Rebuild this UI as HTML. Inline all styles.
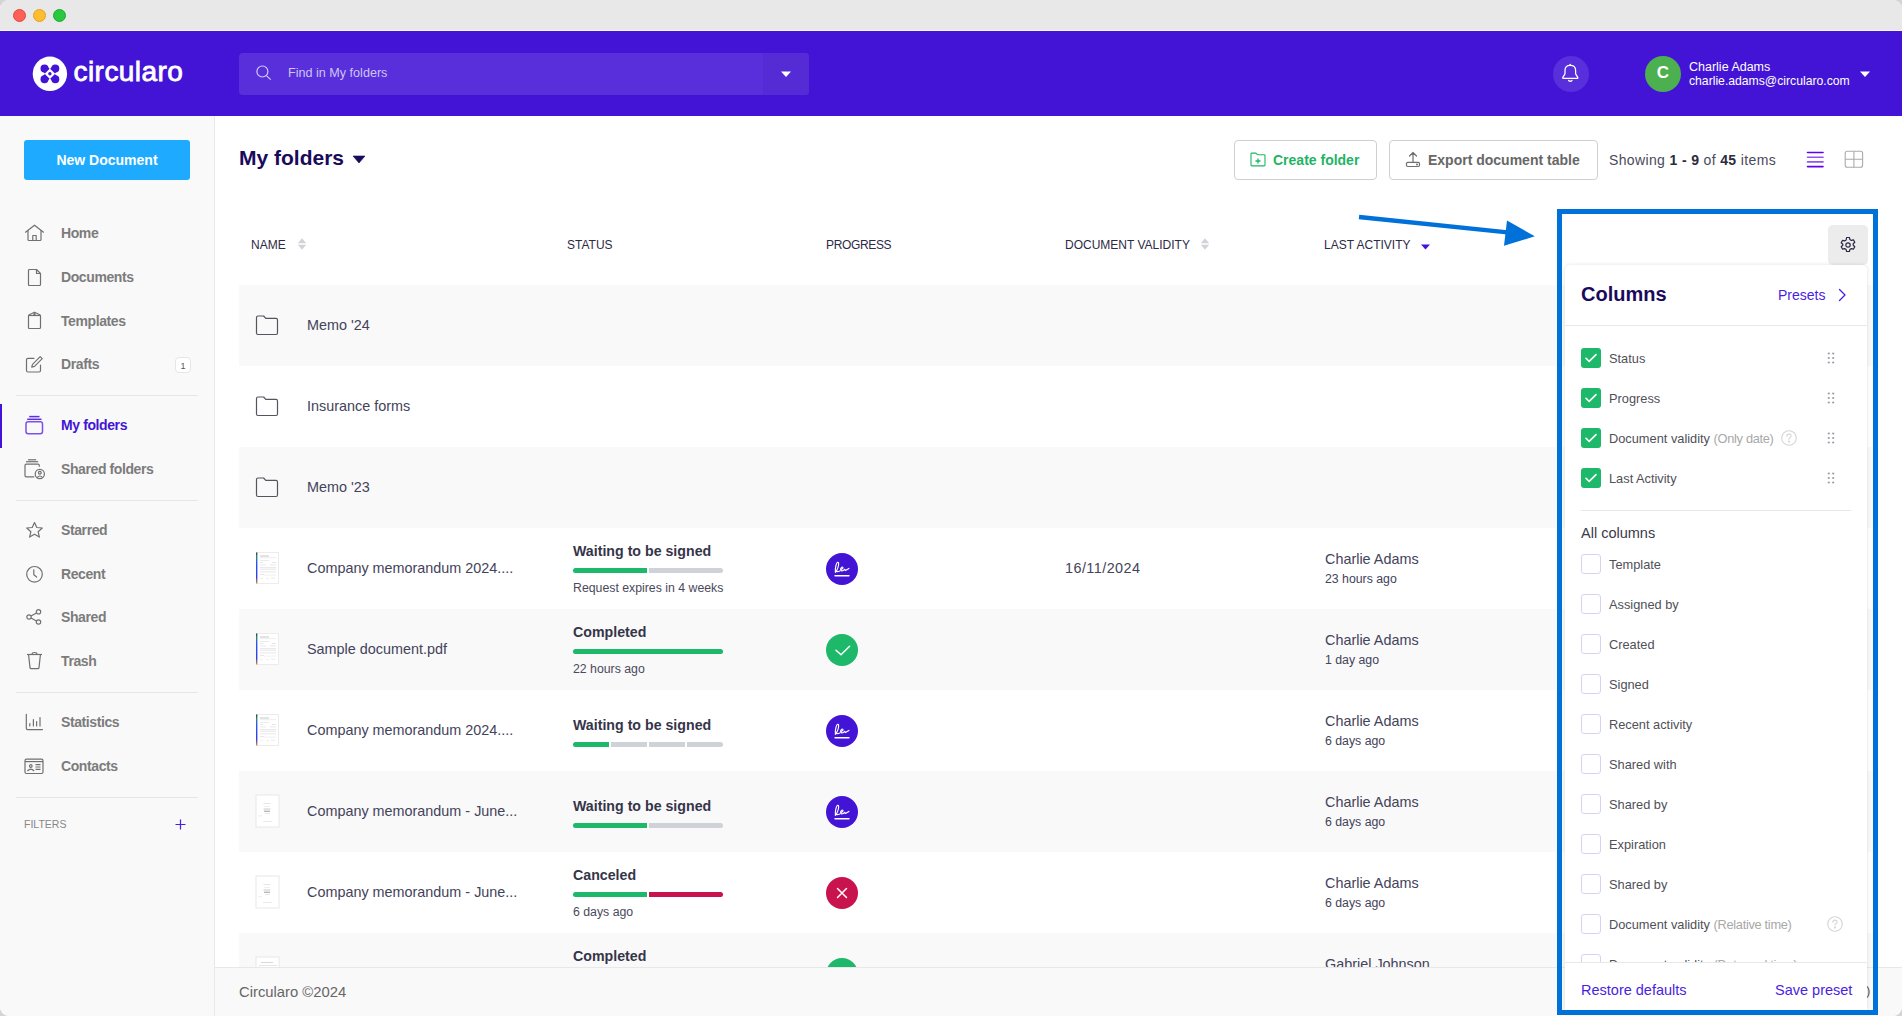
<!DOCTYPE html>
<html><head><meta charset="utf-8">
<style>
*{box-sizing:border-box;margin:0;padding:0}
html,body{width:1902px;height:1016px;overflow:hidden;background:#d4d4d4;font-family:"Liberation Sans",sans-serif}
.a{position:absolute}
.t{position:absolute;white-space:nowrap;line-height:20px;height:20px}
#titlebar{left:0;top:0;width:1902px;height:31px;background:#e8e8e8;border-bottom:1px solid #f4f4f0}
.dot{position:absolute;top:9px;width:13px;height:13px;border-radius:50%}
#header{left:0;top:31px;width:1902px;height:85px;background:#4314d6}
#search{left:239px;top:53px;width:570px;height:42px;background:#582fda;border-radius:4px;overflow:hidden}
#sidebar{left:0;top:116px;width:215px;height:900px;background:#f9f9f9;border-right:1px solid #e9e9e9}
.nav{position:absolute;left:61px;font-size:14px;letter-spacing:-0.4px;font-weight:700;color:#7c7c7c;line-height:20px;white-space:nowrap}
.ico{position:absolute}
.div{position:absolute;left:16px;width:182px;height:1px;background:#e6e6e6}
.row{position:absolute;left:239px;width:1639px;height:81px}
.g{background:#f9f9f9}
.hd{position:absolute;top:235px;font-size:12px;color:#2d2a45;line-height:20px;white-space:nowrap}
.nm{position:absolute;left:307px;font-size:14.4px;color:#43435a;white-space:nowrap;line-height:20px}
.st{position:absolute;left:573px;font-size:14.2px;font-weight:700;color:#35354a;white-space:nowrap;line-height:20px}
.sub{position:absolute;left:573px;margin-top:1px;font-size:12.3px;color:#4a4a5c;white-space:nowrap;line-height:18px}
.bar{position:absolute;left:573px;height:5px;border-radius:3px}
.la1{position:absolute;left:1325px;margin-top:1px;font-size:14.4px;color:#43435a;white-space:nowrap;line-height:20px}
.la2{position:absolute;left:1325px;margin-top:1px;font-size:12.3px;color:#43435a;white-space:nowrap;line-height:18px}
.pc{position:absolute;left:826px;width:32px;height:32px;border-radius:50%}
.cb{position:absolute;left:1581px;width:20px;height:20px;border-radius:3px}
.cbon{background:#1db86a}
.cboff{border:1px solid #d8d2f2;background:#fff}
.cl{position:absolute;left:1609px;font-size:12.8px;margin-top:1px;color:#505058;white-space:nowrap;line-height:20px}
.cl span{color:#a8a8a8;letter-spacing:-0.3px}
.drag{position:absolute;left:1828px;width:6px;height:12px}
</style></head><body>
<div id="win" style="position:absolute;left:0;top:0;width:1902px;height:1016px;overflow:hidden;border-radius:9px;background:#fff">

<!-- title bar -->
<div id="titlebar" class="a">
  <div class="dot" style="left:13px;background:#fe5f57;border:1px solid #e2463f"></div>
  <div class="dot" style="left:33px;background:#febc2e;border:1px solid #e0a028"></div>
  <div class="dot" style="left:53px;background:#28c840;border:1px solid #1aab2e"></div>
</div>

<!-- header -->
<div id="header" class="a"></div>
<svg class="a" style="left:32px;top:56px" width="36" height="36" viewBox="0 0 36 36">
  <circle cx="17.9" cy="17.8" r="17.2" fill="#fff"/>
  <g fill="#4314d6" stroke="#4314d6" stroke-linecap="butt">
    <circle cx="12.5" cy="12.4" r="4.0" stroke="none"/><circle cx="23.3" cy="12.4" r="4.0" stroke="none"/>
    <circle cx="12.5" cy="23.2" r="4.0" stroke="none"/><circle cx="23.3" cy="23.2" r="4.0" stroke="none"/>
    <path d="M12.5 12.4L23.3 23.2M23.3 12.4L12.5 23.2" stroke-width="6.6"/>
  </g>
  <path d="M17.9 12.5L23.2 17.8L17.9 23.1L12.6 17.8z" fill="#fff"/>
  <circle cx="17.9" cy="17.8" r="1.7" fill="#4314d6"/>
</svg>
<div class="t" style="left:73.5px;top:56.5px;font-size:28px;line-height:30px;height:30px;font-weight:400;color:#fff;-webkit-text-stroke:0.8px #fff;letter-spacing:0.45px">circularo</div>

<div id="search" class="a">
  <div class="a" style="left:524px;top:0;width:46px;height:42px;background:#552bd5"></div>
</div>
<svg class="a" style="left:254px;top:63px" width="20" height="20" viewBox="0 0 20 20">
  <circle cx="8.4" cy="8.5" r="5.5" fill="none" stroke="#d6ccf5" stroke-width="1.2"/>
  <line x1="12.4" y1="12.6" x2="16.7" y2="16.6" stroke="#d6ccf5" stroke-width="1.2"/>
</svg>
<div class="t" style="left:288px;top:63px;font-size:12.6px;color:#cfc4f4">Find in My folders</div>
<svg class="a" style="left:780px;top:70px" width="12" height="8" viewBox="0 0 12 8"><path d="M1 1.5h10L6 7z" fill="#fff"/></svg>

<div class="a" style="left:1553px;top:56px;width:36px;height:36px;border-radius:50%;background:#582fda"></div>
<svg class="a" style="left:1560px;top:62px" width="22" height="22" viewBox="0 0 22 22" fill="none" stroke="#fff" stroke-width="1.25" stroke-linejoin="round" stroke-linecap="round">
  <path d="M3.1 16.3h14.4c.4 0 .6-.4.4-.7l-1.5-2.4c-.5-.7-.8-1.2-.8-2V8.3c0-3-2.1-5-5.3-5s-5.3 2-5.3 5v2.9c0 .8-.3 1.3-.8 2l-1.5 2.4c-.2.3 0 .7.4.7z"/>
  <path d="M10.3 2.3v1"/><path d="M8.6 18.5q1.7 1.5 3.4 0"/>
</svg>
<div class="a" style="left:1645px;top:56px;width:36px;height:36px;border-radius:50%;background:#4caf50"></div>
<div class="t" style="left:1645px;top:63px;width:36px;text-align:center;font-size:17px;font-weight:700;color:#fff">C</div>
<div class="t" style="left:1689px;top:57px;font-size:12.5px;color:#fff;line-height:20px">Charlie Adams</div>
<div class="t" style="left:1689px;top:70.5px;font-size:12.2px;color:#fff;line-height:20px">charlie.adams@circularo.com</div>
<svg class="a" style="left:1859px;top:70px" width="12" height="8" viewBox="0 0 12 8"><path d="M1 1.5h10L6 7z" fill="#fff"/></svg>

<!-- sidebar -->
<div id="sidebar" class="a"></div>
<div class="a" style="left:24px;top:140px;width:166px;height:40px;background:#1eabff;border-radius:3px"></div>
<div class="t" style="left:24px;top:150px;width:166px;text-align:center;font-size:14px;font-weight:700;color:#fff">New Document</div>

<div class="nav" style="top:223px">Home</div>
<div class="nav" style="top:267px">Documents</div>
<div class="nav" style="top:311px">Templates</div>
<div class="nav" style="top:354px">Drafts</div>
<div class="a" style="left:175px;top:357px;width:16px;height:16px;border:1px solid #e6e6e6;background:#fff;border-radius:4px;font-size:9px;color:#555;text-align:center;line-height:16px">1</div>
<div class="div" style="top:395px"></div>
<div class="a" style="left:0;top:404px;width:2px;height:44px;background:#4314d6"></div>
<div class="nav" style="top:415px;color:#4314d6">My folders</div>
<div class="nav" style="top:459px">Shared folders</div>
<div class="div" style="top:500px"></div>
<div class="nav" style="top:520px">Starred</div>
<div class="nav" style="top:564px">Recent</div>
<div class="nav" style="top:607px">Shared</div>
<div class="nav" style="top:651px">Trash</div>
<div class="div" style="top:692px"></div>
<div class="nav" style="top:712px">Statistics</div>
<div class="nav" style="top:756px">Contacts</div>
<div class="div" style="top:797px"></div>
<div class="t" style="left:24px;top:814px;font-size:10.5px;color:#888">FILTERS</div>
<svg class="a" style="left:175px;top:818.5px" width="11" height="11" viewBox="0 0 11 11"><path d="M5.5 .5v10M.5 5.5h10" stroke="#4a1ee0" stroke-width="1.2"/></svg>

<!-- main toolbar -->
<div class="t" style="left:239px;top:144px;font-size:21px;line-height:28px;height:28px;font-weight:700;color:#1a0a5c">My folders</div>
<svg class="a" style="left:352px;top:155px" width="14" height="9" viewBox="0 0 14 9"><path d="M1 1h12L7 8z" fill="#1a0a5c" stroke="#1a0a5c" stroke-width=".6" stroke-linejoin="round"/></svg>

<div class="a" style="left:1234px;top:140px;width:143px;height:40px;border:1px solid #cfcfcf;border-radius:4px;background:#fff"></div>
<div class="t" style="left:1273px;top:150px;font-size:14px;font-weight:700;color:#1fb464">Create folder</div>
<div class="a" style="left:1389px;top:140px;width:209px;height:40px;border:1px solid #cfcfcf;border-radius:4px;background:#fff"></div>
<div class="t" style="left:1428px;top:150px;font-size:14px;font-weight:700;color:#676767">Export document table</div>
<div class="t" style="left:1609px;top:150px;font-size:14px;letter-spacing:0.36px;color:#4a4a5a">Showing <b style="color:#2b2b3b">1 - 9</b> of <b style="color:#2b2b3b">45</b> items</div>

<!-- table header -->
<div class="hd" style="left:251px">NAME</div>
<div class="hd" style="left:567px">STATUS</div>
<div class="hd" style="left:826px;letter-spacing:-0.35px">PROGRESS</div>
<div class="hd" style="left:1065px">DOCUMENT VALIDITY</div>
<div class="hd" style="left:1324px">LAST ACTIVITY</div>

<!-- rows -->
<div class="row g" style="top:285px"></div>
<div class="row" style="top:366px"></div>
<div class="row g" style="top:447px"></div>
<div class="row" style="top:528px"></div>
<div class="row g" style="top:609px"></div>
<div class="row" style="top:690px"></div>
<div class="row g" style="top:771px"></div>
<div class="row" style="top:852px"></div>
<div class="row g" style="top:933px"></div>

<div class="nm" style="top:315px">Memo '24</div>
<div class="nm" style="top:396px">Insurance forms</div>
<div class="nm" style="top:477px">Memo '23</div>
<div class="nm" style="top:558px">Company memorandum 2024....</div>
<div class="nm" style="top:639px">Sample document.pdf</div>
<div class="nm" style="top:720px">Company memorandum 2024....</div>
<div class="nm" style="top:801px">Company memorandum - June...</div>
<div class="nm" style="top:882px">Company memorandum - June...</div>


<!-- status column -->
<div class="st" style="top:541px">Waiting to be signed</div>
<div class="bar" style="top:568px;width:74px;background:#1db86a;border-radius:3px 0 0 3px"></div>
<div class="bar" style="top:568px;left:649px;width:74px;background:#cfd2d6;border-radius:0 3px 3px 0"></div>
<div class="sub" style="top:578px">Request expires in 4 weeks</div>

<div class="st" style="top:622px">Completed</div>
<div class="bar" style="top:649px;width:150px;background:#1db86a"></div>
<div class="sub" style="top:659px">22 hours ago</div>

<div class="st" style="top:715px">Waiting to be signed</div>
<div class="bar" style="top:742px;width:36px;background:#1db86a;border-radius:3px 0 0 3px"></div>
<div class="bar" style="top:742px;left:611px;width:36px;background:#cfd2d6;border-radius:0"></div>
<div class="bar" style="top:742px;left:649px;width:36px;background:#cfd2d6;border-radius:0"></div>
<div class="bar" style="top:742px;left:687px;width:36px;background:#cfd2d6;border-radius:0 3px 3px 0"></div>

<div class="st" style="top:796px">Waiting to be signed</div>
<div class="bar" style="top:823px;width:74px;background:#1db86a;border-radius:3px 0 0 3px"></div>
<div class="bar" style="top:823px;left:649px;width:74px;background:#cfd2d6;border-radius:0 3px 3px 0"></div>

<div class="st" style="top:865px">Canceled</div>
<div class="bar" style="top:892px;width:74px;background:#1db86a;border-radius:3px 0 0 3px"></div>
<div class="bar" style="top:892px;left:649px;width:74px;background:#c8134e;border-radius:0 3px 3px 0"></div>
<div class="sub" style="top:902px">6 days ago</div>

<div class="st" style="top:946px">Completed</div>

<!-- progress icons -->
<div class="pc" style="top:553px;background:#4314d6"></div>
<div class="pc" style="top:634px;background:#1db86a"></div>
<div class="pc" style="top:715px;background:#4314d6"></div>
<div class="pc" style="top:796px;background:#4314d6"></div>
<div class="pc" style="top:877px;background:#c8134e"></div>
<div class="pc" style="top:958px;background:#1db86a"></div>

<!-- validity / last activity -->
<div class="nm" style="left:1065px;top:558px;letter-spacing:0.45px">16/11/2024</div>
<div class="la1" style="top:548px">Charlie Adams</div><div class="la2" style="top:569px">23 hours ago</div>
<div class="la1" style="top:629px">Charlie Adams</div><div class="la2" style="top:650px">1 day ago</div>
<div class="la1" style="top:710px">Charlie Adams</div><div class="la2" style="top:731px">6 days ago</div>
<div class="la1" style="top:791px">Charlie Adams</div><div class="la2" style="top:812px">6 days ago</div>
<div class="la1" style="top:872px">Charlie Adams</div><div class="la2" style="top:893px">6 days ago</div>
<div class="la1" style="top:953px">Gabriel Johnson</div>


<!-- sidebar icons -->
<svg class="a" style="left:24px;top:224px" width="22" height="18" viewBox="0 0 22 18" fill="none" stroke="#707070" stroke-width="1.2" stroke-linejoin="round" stroke-linecap="round">
  <path d="M1.5 8.2L10.5 1.2L19.5 8.2"/><path d="M4 6.5V15.5q0 1 1 1H16q1 0 1-1V6.5"/><path d="M8.8 16.5V11.5h3.4v5"/>
</svg>
<svg class="a" style="left:27px;top:268px" width="16" height="19" viewBox="0 0 16 19" fill="none" stroke="#707070" stroke-width="1.2" stroke-linejoin="round">
  <path d="M2.5 1.5H9.5L13.5 5.5V16.5q0 1-1 1H2.5q-1 0-1-1V2.5q0-1 1-1z"/><path d="M9.5 1.5V5.5H13.5"/>
</svg>
<svg class="a" style="left:27px;top:311px" width="16" height="19" viewBox="0 0 16 19" fill="none" stroke="#707070" stroke-width="1.2" stroke-linejoin="round">
  <path d="M7.5 1.2L12.8 3.8q.7.4.7 1.2V16.5q0 1-1 1H2.5q-1 0-1-1V5q0-.8.7-1.2z"/><path d="M1.8 4.5h11.4"/><circle cx="7.5" cy="3.3" r="0.6" fill="#707070"/>
</svg>
<svg class="a" style="left:25px;top:355px" width="19" height="19" viewBox="0 0 19 19" fill="none" stroke="#707070" stroke-width="1.2" stroke-linejoin="round" stroke-linecap="round">
  <path d="M9 3.3H3q-1.5 0-1.5 1.5V15.5q0 1.5 1.5 1.5H14q1.5 0 1.5-1.5V10"/><path d="M15.2 1.6l2 2L9.5 11.3l-2.8.8.8-2.8z"/>
</svg>
<svg class="a" style="left:24px;top:414px" width="22" height="22" viewBox="0 0 22 22" fill="none" stroke="#5b2ee6" stroke-width="1.5" stroke-linejoin="round">
  <rect x="2" y="7.8" width="16.5" height="12" rx="2.2" stroke="#7a52ea"/><path d="M3.2 5.3H17.5" /><path d="M5.2 2.6H15.5"/>
</svg>
<svg class="a" style="left:23px;top:458px" width="24" height="22" viewBox="0 0 24 22" fill="none" stroke="#707070" stroke-width="1.2" stroke-linejoin="round">
  <path d="M16.3 8.8V7.5q0-1.3-1.3-1.3H3.3Q2 6.2 2 7.5V17.5q0 1.3 1.3 1.3H11.3"/><path d="M3 3.7H15.2"/><path d="M5 1.8H13.2"/>
  <circle cx="16.8" cy="16" r="4.6"/><circle cx="16.8" cy="14.7" r="1.4"/><path d="M14 19.6q2.8-3.2 5.6 0"/>
</svg>
<svg class="a" style="left:25px;top:521px" width="19" height="18" viewBox="0 0 19 18" fill="none" stroke="#707070" stroke-width="1.2" stroke-linejoin="round">
  <path d="M9.5 1.5l2.3 5 5.5.5-4.2 3.7 1.3 5.4-4.9-2.9-4.9 2.9 1.3-5.4-4.2-3.7 5.5-.5z"/>
</svg>
<svg class="a" style="left:25px;top:565px" width="19" height="19" viewBox="0 0 19 19" fill="none" stroke="#707070" stroke-width="1.2" stroke-linecap="round">
  <circle cx="9.5" cy="9.3" r="7.8"/><path d="M8.8 4.8V9.6l2.8 2.4"/>
</svg>
<svg class="a" style="left:25px;top:608px" width="18" height="18" viewBox="0 0 18 18" fill="none" stroke="#707070" stroke-width="1.2">
  <circle cx="4" cy="9" r="2.2"/><circle cx="13.5" cy="3.8" r="2.2"/><circle cx="13.5" cy="14" r="2.2"/><path d="M6 8L11.5 4.9M6 10L11.5 13"/>
</svg>
<svg class="a" style="left:26px;top:651px" width="17" height="19" viewBox="0 0 17 19" fill="none" stroke="#707070" stroke-width="1.2" stroke-linejoin="round">
  <path d="M1 3.5H16"/><path d="M6 3.3q0-1.8 2.5-1.8t2.5 1.8"/><path d="M2.6 3.8l1.4 12.8q.1 1 1.1 1h6.8q1 0 1.1-1l1.4-12.8"/>
</svg>
<svg class="a" style="left:25px;top:713px" width="19" height="18" viewBox="0 0 19 18" fill="none" stroke="#707070" stroke-width="1.2" stroke-linecap="round">
  <path d="M1.3 1.3V15.2q0 1.4 1.4 1.4H17.5"/><path d="M4.8 13V10.5M8.4 13V6.5M11.6 13V8.5M15 13V4.5"/>
</svg>
<svg class="a" style="left:24px;top:758px" width="20" height="17" viewBox="0 0 20 17" fill="none" stroke="#707070" stroke-width="1.2" stroke-linejoin="round">
  <rect x="1" y="1.2" width="18" height="14.3" rx="1.5"/><path d="M1 3.6H19"/><circle cx="6.8" cy="8" r="1.3"/><path d="M3.5 13q3.3-3.6 6.6 0"/><path d="M11.5 6.6h5M11.5 9h5M11.5 11.4h5"/>
</svg>

<!-- header sort icons -->
<svg class="a" style="left:297px;top:237px" width="10" height="14" viewBox="0 0 10 14"><path d="M.8 6.2L5 1.2l4.2 5z M.8 7.8L5 12.8l4.2-5z" fill="#d2d2d8"/></svg>
<svg class="a" style="left:1200px;top:237px" width="10" height="14" viewBox="0 0 10 14"><path d="M.8 6.2L5 1.2l4.2 5z M.8 7.8L5 12.8l4.2-5z" fill="#d2d2d8"/></svg>
<svg class="a" style="left:1420px;top:243px" width="11" height="8" viewBox="0 0 11 8"><path d="M1 1.5h9L5.5 6.5z" fill="#4314d6"/></svg>

<!-- folder icons -->
<svg class="a" style="left:254px;top:313px" width="26" height="24" viewBox="0 0 26 24" fill="none" stroke="#555560" stroke-width="1.2" stroke-linejoin="round"><path d="M2.5 4.5q0-1.5 1.5-1.5h5.6l2.2 2.4h10.2q1.5 0 1.5 1.5V20q0 1.5-1.5 1.5H4q-1.5 0-1.5-1.5z"/><path d="M2.5 8H23.5" stroke="none"/></svg>
<svg class="a" style="left:254px;top:394px" width="26" height="24" viewBox="0 0 26 24" fill="none" stroke="#555560" stroke-width="1.2" stroke-linejoin="round"><path d="M2.5 4.5q0-1.5 1.5-1.5h5.6l2.2 2.4h10.2q1.5 0 1.5 1.5V20q0 1.5-1.5 1.5H4q-1.5 0-1.5-1.5z"/></svg>
<svg class="a" style="left:254px;top:475px" width="26" height="24" viewBox="0 0 26 24" fill="none" stroke="#555560" stroke-width="1.2" stroke-linejoin="round"><path d="M2.5 4.5q0-1.5 1.5-1.5h5.6l2.2 2.4h10.2q1.5 0 1.5 1.5V20q0 1.5-1.5 1.5H4q-1.5 0-1.5-1.5z"/></svg>

<!-- toolbar icons -->
<svg class="a" style="left:1250px;top:152px" width="16" height="15" viewBox="0 0 16 15" fill="none" stroke="#1fb464" stroke-width="1.1" stroke-linejoin="round"><path d="M1 2q0-.9.9-.9h4l1.6 1.6h6.6q.9 0 .9.9V13q0 .9-.9.9H1.9Q1 13.9 1 13z"/><path d="M8 6.5v5M5.5 9h5" stroke-width="1.3"/></svg>
<svg class="a" style="left:1405px;top:151px" width="16" height="17" viewBox="0 0 16 17" fill="none" stroke="#707070" stroke-width="1.2" stroke-linejoin="round" stroke-linecap="round"><path d="M8 1.5V11.5M4.5 5L8 1.5 11.5 5"/><rect x="1.5" y="11.3" width="13" height="4.2" rx="1.2"/><circle cx="12" cy="13.4" r="0.4" fill="#707070"/></svg>
<svg class="a" style="left:1806px;top:150px" width="18" height="18" viewBox="0 0 18 18" stroke-width="1.6" stroke-linecap="round"><path d="M1.5 2.5H17" stroke="#5f00ee"/><path d="M1.5 7.2H17" stroke="#8e55f2"/><path d="M1.5 11.9H17" stroke="#8e55f2"/><path d="M1.5 16.6H17" stroke="#5f00ee"/></svg>
<svg class="a" style="left:1844px;top:150px" width="20" height="18" viewBox="0 0 20 18" fill="none" stroke="#aaaaaa" stroke-width="1.1"><rect x="1.2" y="1.3" width="17.4" height="16" rx="2"/><path d="M9.9 1.3V17.3M1.2 9.3H18.6"/></svg>

<!-- doc thumbnails -->
<svg width="0" height="0" style="position:absolute"><defs><linearGradient id="gs" x1="0" y1="0" x2="0" y2="1"><stop offset="0" stop-color="#333"/><stop offset=".12" stop-color="#2a8a6a"/><stop offset=".35" stop-color="#2d50ff"/><stop offset=".8" stop-color="#2d40e0"/><stop offset="1" stop-color="#c89040"/></linearGradient></defs></svg>
<svg class="a" style="left:255px;top:551px" width="25" height="34" viewBox="0 0 25 34"><rect x="1.5" y="1.5" width="22" height="31" fill="#fff" stroke="#ececec" stroke-width="1"/><rect x="1" y="1.5" width="1.4" height="31" fill="url(#gs)"/>
<g fill="#c8c8c8"><rect x="5" y="4.5" width="9" height="1"/></g><g fill="#e2e2e2"><rect x="5" y="6.5" width="16" height=".6"/><rect x="5" y="9" width="9" height=".7"/><rect x="5" y="11" width="3" height=".8"/><rect x="17" y="11" width="4" height=".8"/><rect x="5" y="13.6" width="6" height=".7"/><rect x="15" y="13.6" width="6" height=".7"/><rect x="5" y="16.3" width="16" height=".8"/><rect x="5" y="17.8" width="16" height=".8"/><rect x="5" y="20.5" width="16" height=".8"/><rect x="5" y="23" width="4" height=".8"/><rect x="9" y="23.8" width="12" height=".5"/><rect x="5" y="27.5" width="3" height=".6"/><rect x="11" y="27.5" width="3" height=".6"/><rect x="16" y="26.8" width="4" height=".7"/></g></svg>
<svg class="a" style="left:255px;top:632px" width="25" height="34" viewBox="0 0 25 34"><rect x="1.5" y="1.5" width="22" height="31" fill="#fff" stroke="#ececec" stroke-width="1"/><rect x="1" y="1.5" width="1.4" height="31" fill="url(#gs)"/>
<g fill="#c8c8c8"><rect x="5" y="4.5" width="9" height="1"/></g><g fill="#e2e2e2"><rect x="5" y="6.5" width="16" height=".6"/><rect x="5" y="9" width="9" height=".7"/><rect x="5" y="11" width="3" height=".8"/><rect x="17" y="11" width="4" height=".8"/><rect x="5" y="13.6" width="6" height=".7"/><rect x="15" y="13.6" width="6" height=".7"/><rect x="5" y="16.3" width="16" height=".8"/><rect x="5" y="17.8" width="16" height=".8"/><rect x="5" y="20.5" width="16" height=".8"/><rect x="5" y="23" width="4" height=".8"/><rect x="9" y="23.8" width="12" height=".5"/><rect x="5" y="27.5" width="3" height=".6"/><rect x="11" y="27.5" width="3" height=".6"/><rect x="16" y="26.8" width="4" height=".7"/></g></svg>
<svg class="a" style="left:255px;top:713px" width="25" height="34" viewBox="0 0 25 34"><rect x="1.5" y="1.5" width="22" height="31" fill="#fff" stroke="#ececec" stroke-width="1"/><rect x="1" y="1.5" width="1.4" height="31" fill="url(#gs)"/>
<g fill="#c8c8c8"><rect x="5" y="4.5" width="9" height="1"/></g><g fill="#e2e2e2"><rect x="5" y="6.5" width="16" height=".6"/><rect x="5" y="9" width="9" height=".7"/><rect x="5" y="11" width="3" height=".8"/><rect x="17" y="11" width="4" height=".8"/><rect x="5" y="13.6" width="6" height=".7"/><rect x="15" y="13.6" width="6" height=".7"/><rect x="5" y="16.3" width="16" height=".8"/><rect x="5" y="17.8" width="16" height=".8"/><rect x="5" y="20.5" width="16" height=".8"/><rect x="5" y="23" width="4" height=".8"/><rect x="9" y="23.8" width="12" height=".5"/><rect x="5" y="27.5" width="3" height=".6"/><rect x="11" y="27.5" width="3" height=".6"/><rect x="16" y="26.8" width="4" height=".7"/></g></svg>
<svg class="a" style="left:255px;top:794px" width="25" height="34" viewBox="0 0 25 34"><rect x="1" y="1" width="23" height="32" fill="#fff" stroke="#e8e8e8" stroke-width="1"/>
<g fill="#e0e0e0"><rect x="8.5" y="9" width="7" height=".8"/><rect x="9" y="12.2" width="6" height=".5"/><rect x="8.5" y="14" width="7" height=".8"/><rect x="10" y="19.2" width="5" height=".7"/><rect x="3" y="21.6" width="4" height=".6"/><rect x="8" y="27.2" width="9" height=".6"/></g><rect x="9" y="16.6" width="6" height="1.4" fill="#b8b8b8"/><rect x="8.5" y="15" width="7" height=".6" fill="#d0d0d0"/></svg>
<svg class="a" style="left:255px;top:875px" width="25" height="34" viewBox="0 0 25 34"><rect x="1" y="1" width="23" height="32" fill="#fff" stroke="#e8e8e8" stroke-width="1"/>
<g fill="#e0e0e0"><rect x="8.5" y="9" width="7" height=".8"/><rect x="9" y="12.2" width="6" height=".5"/><rect x="8.5" y="14" width="7" height=".8"/><rect x="10" y="19.2" width="5" height=".7"/><rect x="3" y="21.6" width="4" height=".6"/><rect x="8" y="27.2" width="9" height=".6"/></g><rect x="9" y="16.6" width="6" height="1.4" fill="#b8b8b8"/><rect x="8.5" y="15" width="7" height=".6" fill="#d0d0d0"/></svg>
<svg class="a" style="left:255px;top:956px" width="25" height="12" viewBox="0 0 25 12"><rect x="1" y="1" width="23" height="14" fill="#fff" stroke="#e8e8e8" stroke-width="1"/><rect x="6" y="6" width="12" height="1" fill="#d8d8d8"/><rect x="4" y="9" width="18" height=".8" fill="#e0e0e0"/></svg>
<!-- progress glyphs -->
<svg class="a" style="left:826px;top:553px" width="32" height="32" viewBox="0 0 32 32" fill="none" stroke="#fff" stroke-linecap="round" stroke-linejoin="round"><path d="M9.4 19.4C8.9 15.2 10.4 9.1 11.9 9.3C13.4 9.6 12.4 14.6 10.5 17.9C9.9 19.1 12 18.7 13.8 18M14.6 16.6C15.6 16.3 17.4 15.5 16.9 14.4C16.3 13.4 14.5 14.6 14.6 16.6C14.7 18.3 16.6 18 17.7 17.2L18.7 16.3L19.4 17.6L22.9 15.4" stroke-width="1.15"/><path d="M9 22.7h14" stroke-width="1.4"/></svg><svg class="a" style="left:826px;top:715px" width="32" height="32" viewBox="0 0 32 32" fill="none" stroke="#fff" stroke-linecap="round" stroke-linejoin="round"><path d="M9.4 19.4C8.9 15.2 10.4 9.1 11.9 9.3C13.4 9.6 12.4 14.6 10.5 17.9C9.9 19.1 12 18.7 13.8 18M14.6 16.6C15.6 16.3 17.4 15.5 16.9 14.4C16.3 13.4 14.5 14.6 14.6 16.6C14.7 18.3 16.6 18 17.7 17.2L18.7 16.3L19.4 17.6L22.9 15.4" stroke-width="1.15"/><path d="M9 22.7h14" stroke-width="1.4"/></svg><svg class="a" style="left:826px;top:796px" width="32" height="32" viewBox="0 0 32 32" fill="none" stroke="#fff" stroke-linecap="round" stroke-linejoin="round"><path d="M9.4 19.4C8.9 15.2 10.4 9.1 11.9 9.3C13.4 9.6 12.4 14.6 10.5 17.9C9.9 19.1 12 18.7 13.8 18M14.6 16.6C15.6 16.3 17.4 15.5 16.9 14.4C16.3 13.4 14.5 14.6 14.6 16.6C14.7 18.3 16.6 18 17.7 17.2L18.7 16.3L19.4 17.6L22.9 15.4" stroke-width="1.15"/><path d="M9 22.7h14" stroke-width="1.4"/></svg><svg class="a" style="left:826px;top:634px" width="32" height="32" viewBox="0 0 32 32" fill="none" stroke="#fff" stroke-width="1.5" stroke-linecap="round" stroke-linejoin="round"><path d="M10 16.2l5 4.6 8.6-8.6"/></svg><svg class="a" style="left:826px;top:877px" width="32" height="32" viewBox="0 0 32 32" fill="none" stroke="#fff" stroke-width="1.5" stroke-linecap="round"><path d="M11.5 11.5l9 9M20.5 11.5l-9 9"/></svg><!-- footer (re-cover clipped rows) -->
<div class="a" style="left:215px;top:967px;width:1687px;height:49px;background:#f9f9f9;border-top:1px solid #e8e8e8"></div>
<div class="t" style="left:239px;top:982px;font-size:14.8px;color:#666">Circularo ©2024</div>

<!-- popup -->
<div class="t" style="left:1866px;top:981px;font-size:13px;color:#555">)</div>
<div class="a" style="left:1828px;top:225px;width:40px;height:40px;background:#ececec;border-radius:5px"></div>
<div class="a" style="left:1565px;top:265px;width:302px;height:745px;background:#fff;border-radius:5px 5px 0 0;box-shadow:0 0 4px rgba(0,0,0,0.12)"></div>
<div class="t" style="left:1581px;top:280px;font-size:20px;line-height:28px;height:28px;font-weight:700;color:#1a0a5c">Columns</div>
<div class="t" style="left:1778px;top:285px;font-size:14px;color:#4a1ee0">Presets</div>
<div class="a" style="left:1565px;top:325px;width:302px;height:1px;background:#e8e8e8"></div>

<div class="cb cbon" style="top:348px"></div><div class="cl" style="top:348px">Status</div>
<div class="cb cbon" style="top:388px"></div><div class="cl" style="top:388px">Progress</div>
<div class="cb cbon" style="top:428px"></div><div class="cl" style="top:428px">Document validity <span>(Only date)</span></div>
<div class="cb cbon" style="top:468px"></div><div class="cl" style="top:468px">Last Activity</div>
<div class="a" style="left:1581px;top:510px;width:270px;height:1px;background:#e8e8e8"></div>
<div class="t" style="left:1581px;top:523px;font-size:14.5px;color:#3a3a4a">All columns</div>
<div class="cb cboff" style="top:554px"></div><div class="cl" style="top:554px">Template</div>
<div class="cb cboff" style="top:594px"></div><div class="cl" style="top:594px">Assigned by</div>
<div class="cb cboff" style="top:634px"></div><div class="cl" style="top:634px">Created</div>
<div class="cb cboff" style="top:674px"></div><div class="cl" style="top:674px">Signed</div>
<div class="cb cboff" style="top:714px"></div><div class="cl" style="top:714px">Recent activity</div>
<div class="cb cboff" style="top:754px"></div><div class="cl" style="top:754px">Shared with</div>
<div class="cb cboff" style="top:794px"></div><div class="cl" style="top:794px">Shared by</div>
<div class="cb cboff" style="top:834px"></div><div class="cl" style="top:834px">Expiration</div>
<div class="cb cboff" style="top:874px"></div><div class="cl" style="top:874px">Shared by</div>
<div class="cb cboff" style="top:914px"></div><div class="cl" style="top:914px">Document validity <span>(Relative time)</span></div>
<div class="a" style="left:1565px;top:944px;width:302px;height:18px;overflow:hidden">
  <div class="cb cboff" style="left:16px;top:10px"></div><div class="cl" style="left:44px;top:10px">Document validity <span>(Date and time)</span></div>
</div>
<div class="a" style="left:1565px;top:962px;width:302px;height:1px;background:#e8e8e8"></div>
<div class="t" style="left:1581px;top:979.5px;font-size:14.5px;color:#4a1ee0">Restore defaults</div>
<div class="t" style="left:1775px;top:979.5px;font-size:14.5px;color:#4a1ee0">Save preset</div>


<!-- popup icons -->
<svg class="a" style="left:1838px;top:235px" width="20" height="20" viewBox="0 0 20 20" fill="none" stroke="#2a2740" stroke-width="1.2" stroke-linejoin="round">
  <path d="M8.6 2.5h2.8l.5 2.1 1.4.8 2.1-.6 1.4 2.4-1.6 1.5v1.6l1.6 1.5-1.4 2.4-2.1-.6-1.4.8-.5 2.1H8.6l-.5-2.1-1.4-.8-2.1.6-1.4-2.4 1.6-1.5V9.2L3.2 7.7l1.4-2.4 2.1.6 1.4-.8z"/><circle cx="10" cy="10" r="2.2"/>
</svg>
<svg class="a" style="left:1837px;top:287px" width="10" height="16" viewBox="0 0 10 16" fill="none" stroke="#4a1ee0" stroke-width="1.3" stroke-linecap="round" stroke-linejoin="round"><path d="M2.5 2.5L8 8l-5.5 5.5"/></svg>
<svg class="a" style="left:1581px;top:348px" width="20" height="20" viewBox="0 0 20 20" fill="none" stroke="#fff" stroke-width="1.6" stroke-linecap="round" stroke-linejoin="round"><path d="M5 10.2l3.2 3.2L15 6.6"/></svg><svg class="a" style="left:1826px;top:351px" width="10" height="14" viewBox="0 0 10 14" fill="#9a9aa6"><circle cx="2.8" cy="2.5" r="1.1"/><circle cx="7.2" cy="2.5" r="1.1"/><circle cx="2.8" cy="7" r="1.1"/><circle cx="7.2" cy="7" r="1.1"/><circle cx="2.8" cy="11.5" r="1.1"/><circle cx="7.2" cy="11.5" r="1.1"/></svg><svg class="a" style="left:1581px;top:388px" width="20" height="20" viewBox="0 0 20 20" fill="none" stroke="#fff" stroke-width="1.6" stroke-linecap="round" stroke-linejoin="round"><path d="M5 10.2l3.2 3.2L15 6.6"/></svg><svg class="a" style="left:1826px;top:391px" width="10" height="14" viewBox="0 0 10 14" fill="#9a9aa6"><circle cx="2.8" cy="2.5" r="1.1"/><circle cx="7.2" cy="2.5" r="1.1"/><circle cx="2.8" cy="7" r="1.1"/><circle cx="7.2" cy="7" r="1.1"/><circle cx="2.8" cy="11.5" r="1.1"/><circle cx="7.2" cy="11.5" r="1.1"/></svg><svg class="a" style="left:1581px;top:428px" width="20" height="20" viewBox="0 0 20 20" fill="none" stroke="#fff" stroke-width="1.6" stroke-linecap="round" stroke-linejoin="round"><path d="M5 10.2l3.2 3.2L15 6.6"/></svg><svg class="a" style="left:1826px;top:431px" width="10" height="14" viewBox="0 0 10 14" fill="#9a9aa6"><circle cx="2.8" cy="2.5" r="1.1"/><circle cx="7.2" cy="2.5" r="1.1"/><circle cx="2.8" cy="7" r="1.1"/><circle cx="7.2" cy="7" r="1.1"/><circle cx="2.8" cy="11.5" r="1.1"/><circle cx="7.2" cy="11.5" r="1.1"/></svg><svg class="a" style="left:1581px;top:468px" width="20" height="20" viewBox="0 0 20 20" fill="none" stroke="#fff" stroke-width="1.6" stroke-linecap="round" stroke-linejoin="round"><path d="M5 10.2l3.2 3.2L15 6.6"/></svg><svg class="a" style="left:1826px;top:471px" width="10" height="14" viewBox="0 0 10 14" fill="#9a9aa6"><circle cx="2.8" cy="2.5" r="1.1"/><circle cx="7.2" cy="2.5" r="1.1"/><circle cx="2.8" cy="7" r="1.1"/><circle cx="7.2" cy="7" r="1.1"/><circle cx="2.8" cy="11.5" r="1.1"/><circle cx="7.2" cy="11.5" r="1.1"/></svg><svg class="a" style="left:1780px;top:429px" width="18" height="18" viewBox="0 0 18 18" fill="none" stroke="#d5d5d5" stroke-width="1.1"><circle cx="9" cy="9" r="7.3"/><path d="M6.9 7.2q0-2.1 2.1-2.1t2.1 1.9q0 1.2-1.3 1.8-.8.4-.8 1.4" stroke-linecap="round"/><circle cx="9" cy="12.6" r="0.5" fill="#d5d5d5"/></svg><svg class="a" style="left:1826px;top:915px" width="18" height="18" viewBox="0 0 18 18" fill="none" stroke="#d5d5d5" stroke-width="1.1"><circle cx="9" cy="9" r="7.3"/><path d="M6.9 7.2q0-2.1 2.1-2.1t2.1 1.9q0 1.2-1.3 1.8-.8.4-.8 1.4" stroke-linecap="round"/><circle cx="9" cy="12.6" r="0.5" fill="#d5d5d5"/></svg><div class="a" style="left:1557px;top:209px;width:321px;height:806px;border:5px solid #0071d9"></div>

<svg class="a" style="left:1350px;top:205px" width="200" height="50" viewBox="1350 205 200 50"><line x1="1359" y1="217" x2="1510" y2="232.6" stroke="#0071d9" stroke-width="4.4"/><path d="M1507 220.5L1534.8 236.3L1504 245.8z" fill="#0071d9"/></svg>
</div>
</body></html>
